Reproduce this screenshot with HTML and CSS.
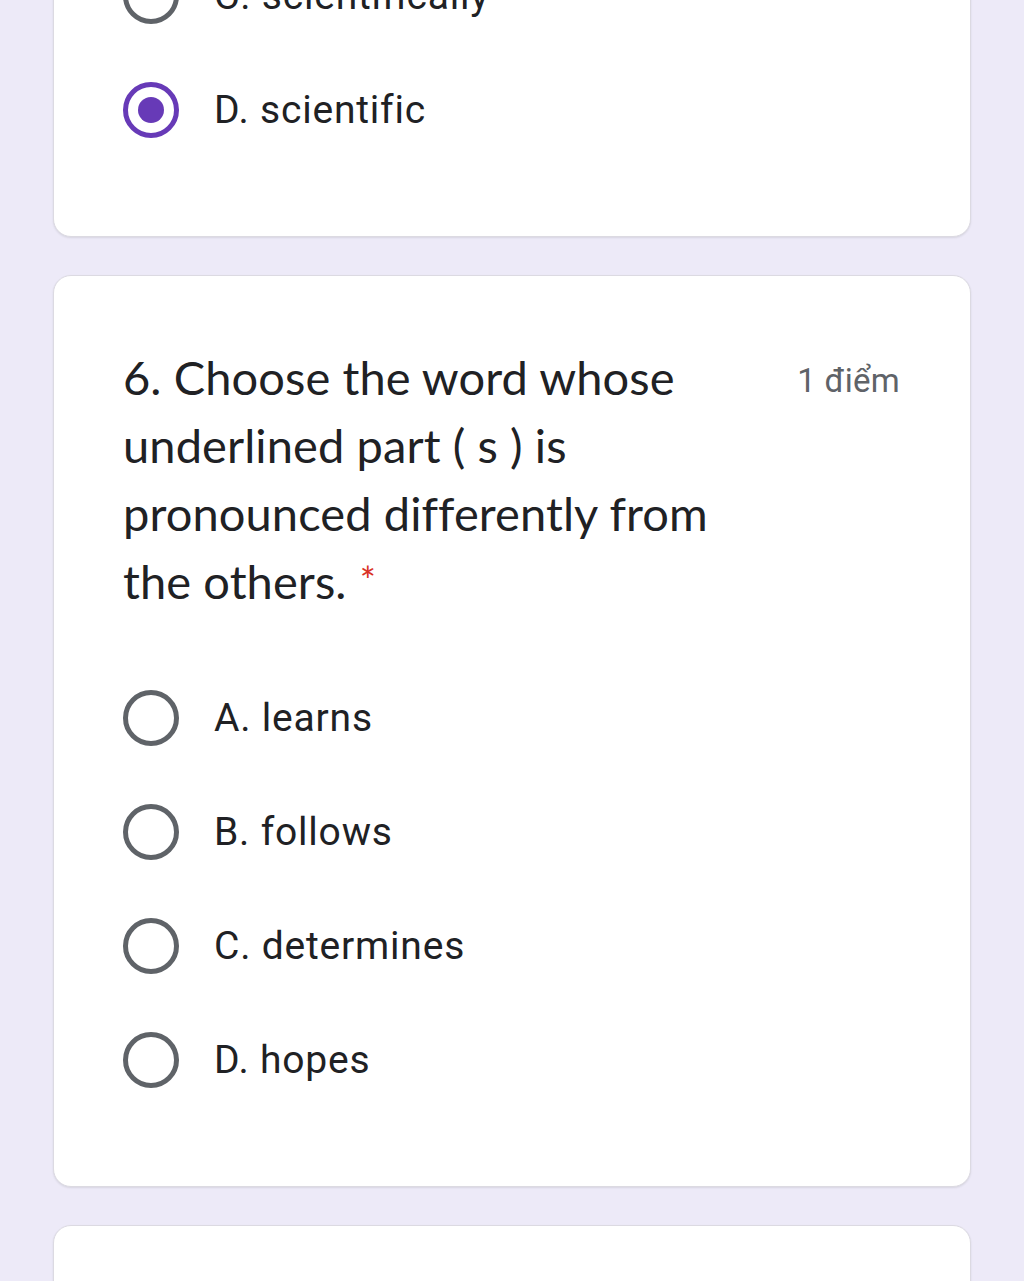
FILE: index.html
```html
<!DOCTYPE html>
<html lang="vi">
<head>
<meta charset="utf-8">
<link rel="stylesheet" href="styles.css">
</head>
<body>
<div class="page">
  <section class="card card-top">
    <div class="options">
      <div class="option"><span class="radio"></span><span class="label">C. scientifically</span></div>
      <div class="option"><span class="radio checked"></span><span class="label">D. scientific</span></div>
    </div>
  </section>
  <section class="card">
    <div class="head">
      <div class="title">6. Choose the word whose<br>underlined part ( s ) is<br>pronounced differently from<br>the others. <span class="req">*</span></div>
      <div class="points">1 điểm</div>
    </div>
    <div class="options">
      <div class="option"><span class="radio"></span><span class="label">A. learns</span></div>
      <div class="option"><span class="radio"></span><span class="label">B. follows</span></div>
      <div class="option"><span class="radio"></span><span class="label">C. determines</span></div>
      <div class="option"><span class="radio"></span><span class="label">D. hopes</span></div>
    </div>
  </section>
  <section class="card card-bottom"></section>
</div>
</body>
</html>
```
FILE: styles.css
```css
html, body {
  margin: 0;
  padding: 0;
  background: #edeaf8;
  height: 1281px;
  overflow: hidden;
}
.page {
  display: flex;
  flex-direction: column;
  gap: 38px;
  padding: 0 53px;
}
.card {
  background: #fff;
  border: 1px solid #dcdae2;
  border-radius: 18px;
  box-shadow: 0 1px 2px rgba(60, 64, 67, 0.12);
  padding: 67px 69px 69px;
}
.card-top {
  margin-top: -62px;
  padding-top: 0;
  border-top-left-radius: 0;
  border-top-right-radius: 0;
}
.card-bottom {
  height: 200px;
  padding: 0;
}
.head {
  display: flex;
  justify-content: space-between;
  align-items: flex-start;
  margin-bottom: 46px;
}
.title {
  font-family: Lato, "Noto Sans", sans-serif;
  font-size: 47px;
  line-height: 68px;
  color: #202124;
  font-variant-ligatures: none;
  letter-spacing: 0.1px;
}
.req {
  color: #d93025;
  font-size: 38px;
  vertical-align: top;
  position: relative;
  top: -1px;
  margin-left: 1px;
}
.points {
  font-family: Roboto, "Noto Sans", sans-serif;
  font-size: 33px;
  line-height: 68px;
  color: #5f6368;
  padding-top: 4px;
  padding-right: 1px;
  letter-spacing: 0.3px;
}
.options {
  display: flex;
  flex-direction: column;
}
.option {
  display: flex;
  align-items: center;
  height: 114px;
}
.radio {
  box-sizing: border-box;
  width: 56px;
  height: 56px;
  border: 5px solid #5f6368;
  border-radius: 50%;
  flex: none;
  display: flex;
  align-items: center;
  justify-content: center;
}
.radio.checked {
  border-color: #673ab7;
}
.radio.checked::after {
  content: "";
  width: 26px;
  height: 26px;
  border-radius: 50%;
  background: #673ab7;
}
.label {
  margin-left: 35px;
  font-family: Roboto, "Noto Sans", sans-serif;
  font-size: 39px;
  letter-spacing: 0.8px;
  color: #202124;
}
```
